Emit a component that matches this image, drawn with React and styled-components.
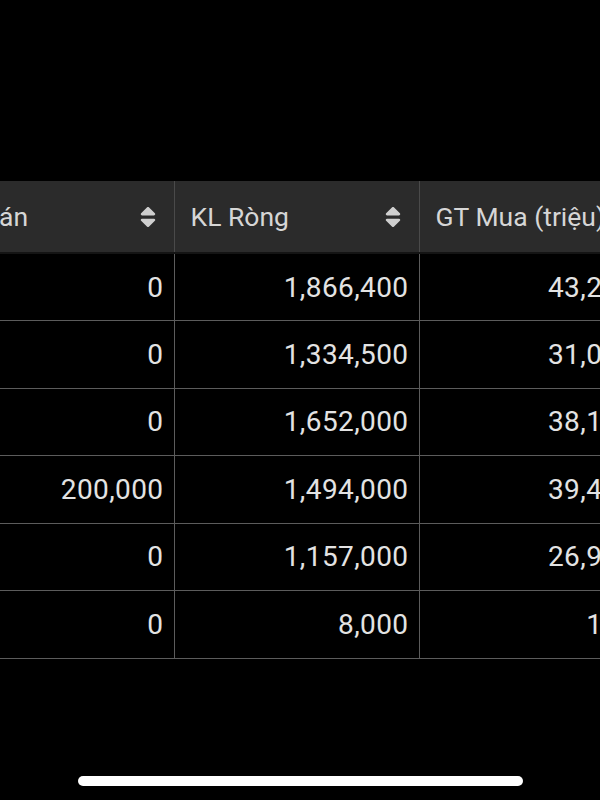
import React from "react"
import styled, { createGlobalStyle } from "styled-components"
import { FaSort } from "react-icons/fa"

const GlobalStyle = createGlobalStyle`
  html, body {
    margin: 0;
    padding: 0;
    background: #000000;
  }
  body {
    font-family: Roboto, "Noto Sans", "Liberation Sans", sans-serif;
  }
`

// Screen shell
const Screen = styled.div`
  width: 600px;
  height: 800px;
  background: #000000;
  display: flex;
  flex-direction: column;
  overflow: hidden;
`

const Viewport = styled.div`
  margin-top: 181px;
  overflow: hidden;
  width: 100%;
`

// table is scrolled sideways, first column partly hidden
const Table = styled.table`
  margin-left: -71px;
  border-collapse: collapse;
  table-layout: fixed;
  width: 740px;
  color: #e3e3e3;
`

const Col = styled.col`
  width: ${(p) => p.$w}px;
`

const Th = styled.th`
  box-sizing: border-box;
  height: 72px;
  padding: 0 13px 0 16px;
  background: #2b2b2b;
  border-right: 1px solid #4a4a4a;
  border-bottom: 2px solid #141414;
  font-size: 26.5px;
  font-weight: 400;
  color: #d6d6d6;
  text-align: left;
  white-space: nowrap;
  overflow: hidden;
`

const HeadInner = styled.div`
  display: flex;
  align-items: center;
  justify-content: space-between;
  gap: 8px;
`

const SortIcon = styled(FaSort)`
  flex: none;
  color: #cfcfcf;
  font-size: 26px;
`

const Tr = styled.tr`
  height: 67.5px;
  border-top: 1px solid ${(p) => (p.$first ? "#9a9a9a" : "#5c5c5c")};
  border-bottom: 1px solid #5c5c5c;
`

const Td = styled.td`
  box-sizing: border-box;
  padding: 0 10px 0 12px;
  text-align: right;
  font-size: 28px;
  letter-spacing: 0.4px;
  border-right: 1px solid #5c5c5c;
  white-space: nowrap;
  overflow: hidden;
`

const HomeBar = styled.div`
  margin: auto auto 14px;
  width: 445px;
  height: 10px;
  border-radius: 5px;
  background: #ffffff;
`

const columns = [
  { title: "KL Bán", w: 245, sort: true },
  { title: "KL Ròng", w: 245, sort: true },
  { title: "GT Mua (triệu)", w: 250, sort: false },
]

const rows = [
  ["0", "1,866,400", "43,207.8"],
  ["0", "1,334,500", "31,092.4"],
  ["0", "1,652,000", "38,164.3"],
  ["200,000", "1,494,000", "39,458.6"],
  ["0", "1,157,000", "26,915.2"],
  ["0", "8,000", "185.2"],
]

export default function App() {
  return (
    <>
      <GlobalStyle />
      <Screen>
        <Viewport>
          <Table>
            <colgroup>
              {columns.map((c) => (
                <Col key={c.title} $w={c.w} />
              ))}
            </colgroup>
            <thead>
              <tr>
                {columns.map((c) => (
                  <Th key={c.title}>
                    <HeadInner>
                      <span>{c.title}</span>
                      {c.sort && <SortIcon />}
                    </HeadInner>
                  </Th>
                ))}
              </tr>
            </thead>
            <tbody>
              {rows.map((r, i) => (
                <Tr key={i} $first={i === 0}>
                  {r.map((v, j) => (
                    <Td key={j}>{v}</Td>
                  ))}
                </Tr>
              ))}
            </tbody>
          </Table>
        </Viewport>
        <HomeBar />
      </Screen>
    </>
  )
}
